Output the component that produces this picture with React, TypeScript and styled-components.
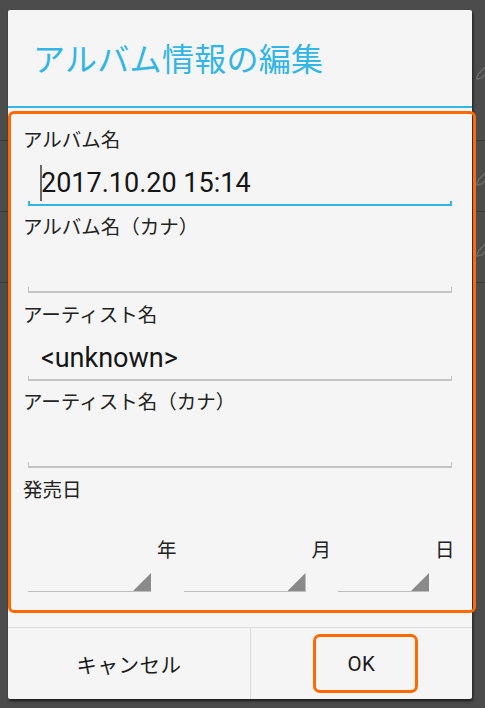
import React from "react";
import styled, { createGlobalStyle } from "styled-components";
import { Pencil } from "lucide-react";

const GlobalStyle = createGlobalStyle`
  html, body { margin: 0; padding: 0; background: #4c4c4c; }
  body { font-family: "Noto Sans CJK JP", "Noto Sans", sans-serif; }
  * { box-sizing: border-box; }
`;

const Screen = styled.div`
  position: relative;
  width: 485px;
  height: 708px;
  overflow: hidden;
  background: #4c4c4c;
`;

const Backdrop = styled.div`
  display: flex;
  flex-direction: column;
  width: 100%;
  height: 100%;
`;

const BackRow = styled.div<{ $h: number }>`
  height: ${(p) => p.$h}px;
  border-bottom: 1px solid #3a3a3a;
  display: flex;
  align-items: center;
  justify-content: flex-end;
`;

const BackIcon = styled.span`
  display: flex;
  margin-right: -12px;
  color: #6c6c6c;
`;

const Dialog = styled.div`
  position: absolute;
  left: 8px;
  top: 10px;
  width: 464px;
  height: 689px;
  background: #f5f5f5;
  border-radius: 2px;
  box-shadow: 1px 2px 3px rgba(0, 0, 0, 0.65);
  display: flex;
  flex-direction: column;
`;

const TitleBar = styled.div`
  height: 96px;
  display: flex;
  align-items: center;
  padding: 0 0 3px 25px;
  font-size: 32px;
  color: #33b5e5;
  letter-spacing: 0.3px;
`;

const TitleDivider = styled.div`
  height: 2px;
  background: #33b5e5;
`;

const Content = styled.div`
  flex: 1;
  padding-top: 16.5px;
  display: flex;
  flex-direction: column;
`;

const Group = styled.div`
  display: flex;
  flex-direction: column;
  margin-bottom: 6.5px;
`;

const Label = styled.div`
  height: 28px;
  line-height: 28px;
  font-size: 19.5px;
  color: #222;
  padding-left: 15px;
`;

const Field = styled.div`
  height: 53px;
  margin: 0 20px;
  display: flex;
  flex-direction: column;
`;

const ValueLine = styled.div`
  flex: 1;
  padding: 12px 0 0 13px;
  font-family: "Roboto", sans-serif;
  font-size: 27px;
  line-height: 36px;
  color: #151515;
  white-space: nowrap;
`;

const ValueText = styled.span`
  position: relative;
  display: inline-block;
  height: 36px;
`;

const Caret = styled.span`
  position: absolute;
  left: -1px;
  top: 0;
  width: 1.5px;
  height: 36px;
  background: #6a6a6a;
`;

const Underline = styled.div<{ $focused?: boolean }>`
  height: 6px;
  border: ${(p) => (p.$focused ? "2px solid #33b5e5" : "1px solid #c4c4c4")};
  border-bottom-width: 2px;
  border-top: none;
`;

const DateRow = styled.div`
  display: flex;
  align-items: flex-start;
  padding: 32px 0 0 20px;
`;

const DateCell = styled.div`
  display: flex;
  align-items: flex-start;
  margin-right: 7px;
`;

const Spinner = styled.div<{ $w: number }>`
  width: ${(p) => p.$w}px;
  height: 57.5px;
  display: flex;
  flex-direction: column;
  justify-content: flex-end;
`;

const SpinnerBar = styled.div`
  height: 19px;
  display: flex;
  justify-content: flex-end;
  align-items: flex-end;
  border-bottom: 1.5px solid #bdbdbd;
`;

const SpinnerArrow = styled.div`
  width: 18px;
  height: 18px;
  background: #8a8a8a;
  clip-path: polygon(100% 0, 100% 100%, 0 100%);
`;

const DateUnit = styled.div`
  margin-left: 6px;
  font-size: 19.5px;
  line-height: 28px;
  color: #222;
`;

const Footer = styled.div`
  height: 72px;
  border-top: 1px solid #dcdcdc;
  display: grid;
  grid-template-columns: 242px 1fr;
`;

const FooterButton = styled.div<{ $divider?: boolean }>`
  display: flex;
  align-items: center;
  justify-content: center;
  font-size: 20.5px;
  color: #1a1a1a;
  border-left: ${(p) => (p.$divider ? "1px solid #dcdcdc" : "none")};
  font-family: ${(p) =>
    p.$divider ? `"Roboto", "Noto Sans CJK JP", sans-serif` : `"Noto Sans CJK JP", sans-serif`};
  letter-spacing: 0.5px;
`;

const Highlight = styled.div<{ $x: number; $y: number; $w: number; $h: number; $r: number }>`
  position: absolute;
  left: ${(p) => p.$x}px;
  top: ${(p) => p.$y}px;
  width: ${(p) => p.$w}px;
  height: ${(p) => p.$h}px;
  border: 3px solid #ff6a00;
  border-radius: ${(p) => p.$r}px;
  pointer-events: none;
`;

type FieldDef = { label: string; value?: string; focused?: boolean };

const fields: FieldDef[] = [
  { label: "アルバム名", value: "2017.10.20 15:14", focused: true },
  { label: "アルバム名（カナ）" },
  { label: "アーティスト名", value: "<unknown>" },
  { label: "アーティスト名（カナ）" },
];

const dateParts = [
  { w: 123, unit: "年" },
  { w: 122, unit: "月" },
  { w: 91, unit: "日" },
];

const backRows = [141, 71, 71];

export default function App() {
  return (
    <>
      <GlobalStyle />
      <Screen>
        <Backdrop>
          {backRows.map((h, i) => (
            <BackRow key={i} $h={h}>
              <BackIcon>
                <Pencil size={22} strokeWidth={1.5} />
              </BackIcon>
            </BackRow>
          ))}
        </Backdrop>

        <Dialog>
          <TitleBar>アルバム情報の編集</TitleBar>
          <TitleDivider />
          <Content>
            {fields.map((f) => (
              <Group key={f.label}>
                <Label>{f.label}</Label>
                <Field>
                  <ValueLine>
                    {f.value !== undefined && (
                      <ValueText>
                        {f.focused && <Caret />}
                        {f.value}
                      </ValueText>
                    )}
                  </ValueLine>
                  <Underline $focused={f.focused} />
                </Field>
              </Group>
            ))}
            <Label>発売日</Label>
            <DateRow>
              {dateParts.map((d) => (
                <DateCell key={d.unit}>
                  <Spinner $w={d.w}>
                    <SpinnerBar>
                      <SpinnerArrow />
                    </SpinnerBar>
                  </Spinner>
                  <DateUnit>{d.unit}</DateUnit>
                </DateCell>
              ))}
            </DateRow>
          </Content>
          <Footer>
            <FooterButton>キャンセル</FooterButton>
            <FooterButton $divider>OK</FooterButton>
          </Footer>
        </Dialog>

        <Highlight $x={8} $y={111} $w={468} $h={502} $r={6} />
        <Highlight $x={313} $y={634} $w={105} $h={59} $r={7} />
      </Screen>
    </>
  );
}
